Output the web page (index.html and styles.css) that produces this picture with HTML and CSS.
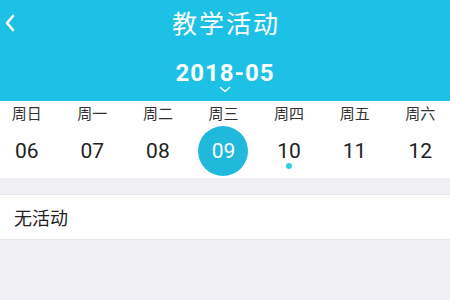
FILE: index.html
```html
<!DOCTYPE html>
<html>
<head>
<meta charset="utf-8">
<link rel="stylesheet" href="styles.css">
</head>
<body>
<header class="header">
  <div class="titlebar">
    <svg class="back" width="12" height="18" viewBox="0 0 12 18"><path d="M9 2 L3 9 L9 16" fill="none" stroke="#fff" stroke-width="2.6" stroke-linecap="round" stroke-linejoin="round"/></svg>
    <div class="title">教学活动</div>
  </div>
  <div class="month">2018-05</div>
  <svg class="down" width="12" height="7" viewBox="0 0 12 7"><path d="M1.5 1.5 L6 5.5 L10.5 1.5" fill="none" stroke="#fff" stroke-width="1.4" stroke-linecap="round" stroke-linejoin="round"/></svg>
</header>
<section class="week">
  <div class="days">
    <div class="day"><span class="wd">周日</span><span class="date">06</span></div>
    <div class="day"><span class="wd">周一</span><span class="date">07</span></div>
    <div class="day"><span class="wd">周二</span><span class="date">08</span></div>
    <div class="day"><span class="wd">周三</span><span class="date selected">09</span></div>
    <div class="day"><span class="wd">周四</span><span class="date">10<i class="dot"></i></span></div>
    <div class="day"><span class="wd">周五</span><span class="date">11</span></div>
    <div class="day"><span class="wd">周六</span><span class="date">12</span></div>
  </div>
</section>
<div class="list">
  <div class="item">无活动</div>
</div>
</body>
</html>
```
FILE: styles.css
```css
html, body {
  margin: 0;
  padding: 0;
  width: 450px;
  height: 300px;
  overflow: hidden;
  background: #efeff4;
  font-family: Roboto, "Noto Sans CJK SC", sans-serif;
}
.header {
  background: #1ec1e6;
  height: 101px;
  display: flex;
  flex-direction: column;
  align-items: center;
  color: #fff;
}
.titlebar {
  position: relative;
  width: 100%;
  height: 44px;
  display: flex;
  align-items: center;
  justify-content: center;
}
.back {
  position: absolute;
  left: 4px;
  top: 14px;
}
.title {
  font-family: "Noto Sans CJK SC", sans-serif;
  font-size: 25px;
  letter-spacing: 2px;
  line-height: 44px;
  padding-left: 2px;
}
.month {
  margin-top: 14px;
  font-size: 24px;
  font-weight: bold;
  line-height: 30px;
  letter-spacing: 1px;
}
.down {
  margin-top: -2px;
}
.week {
  background: #fff;
  height: 77px;
  overflow: hidden;
}
.days {
  display: grid;
  grid-template-columns: repeat(7, 1fr);
  margin: 0 -3px 0 -6px;
}
.day {
  display: flex;
  flex-direction: column;
  align-items: center;
}
.wd {
  font-family: "Noto Sans CJK SC", sans-serif;
  font-size: 15px;
  line-height: 24px;
  color: #333;
}
.date {
  position: relative;
  margin-top: 1px;
  width: 50px;
  height: 50px;
  border-radius: 50%;
  display: flex;
  align-items: center;
  justify-content: center;
  font-size: 21px;
  color: #222;
}
.date.selected {
  background: #20b9dc;
  color: #fff;
}
.dot {
  position: absolute;
  left: 22px;
  top: 37px;
  width: 6px;
  height: 6px;
  border-radius: 50%;
  background: #2ad3e2;
}
.list {
  margin-top: 16px;
  background: #fff;
  border-top: 1px solid #e6e6ea;
  border-bottom: 1px solid #e3e3e6;
}
.item {
  height: 44px;
  line-height: 44px;
  padding-left: 14px;
  font-family: "Noto Sans CJK SC", sans-serif;
  font-size: 18px;
  color: #222;
}
```
